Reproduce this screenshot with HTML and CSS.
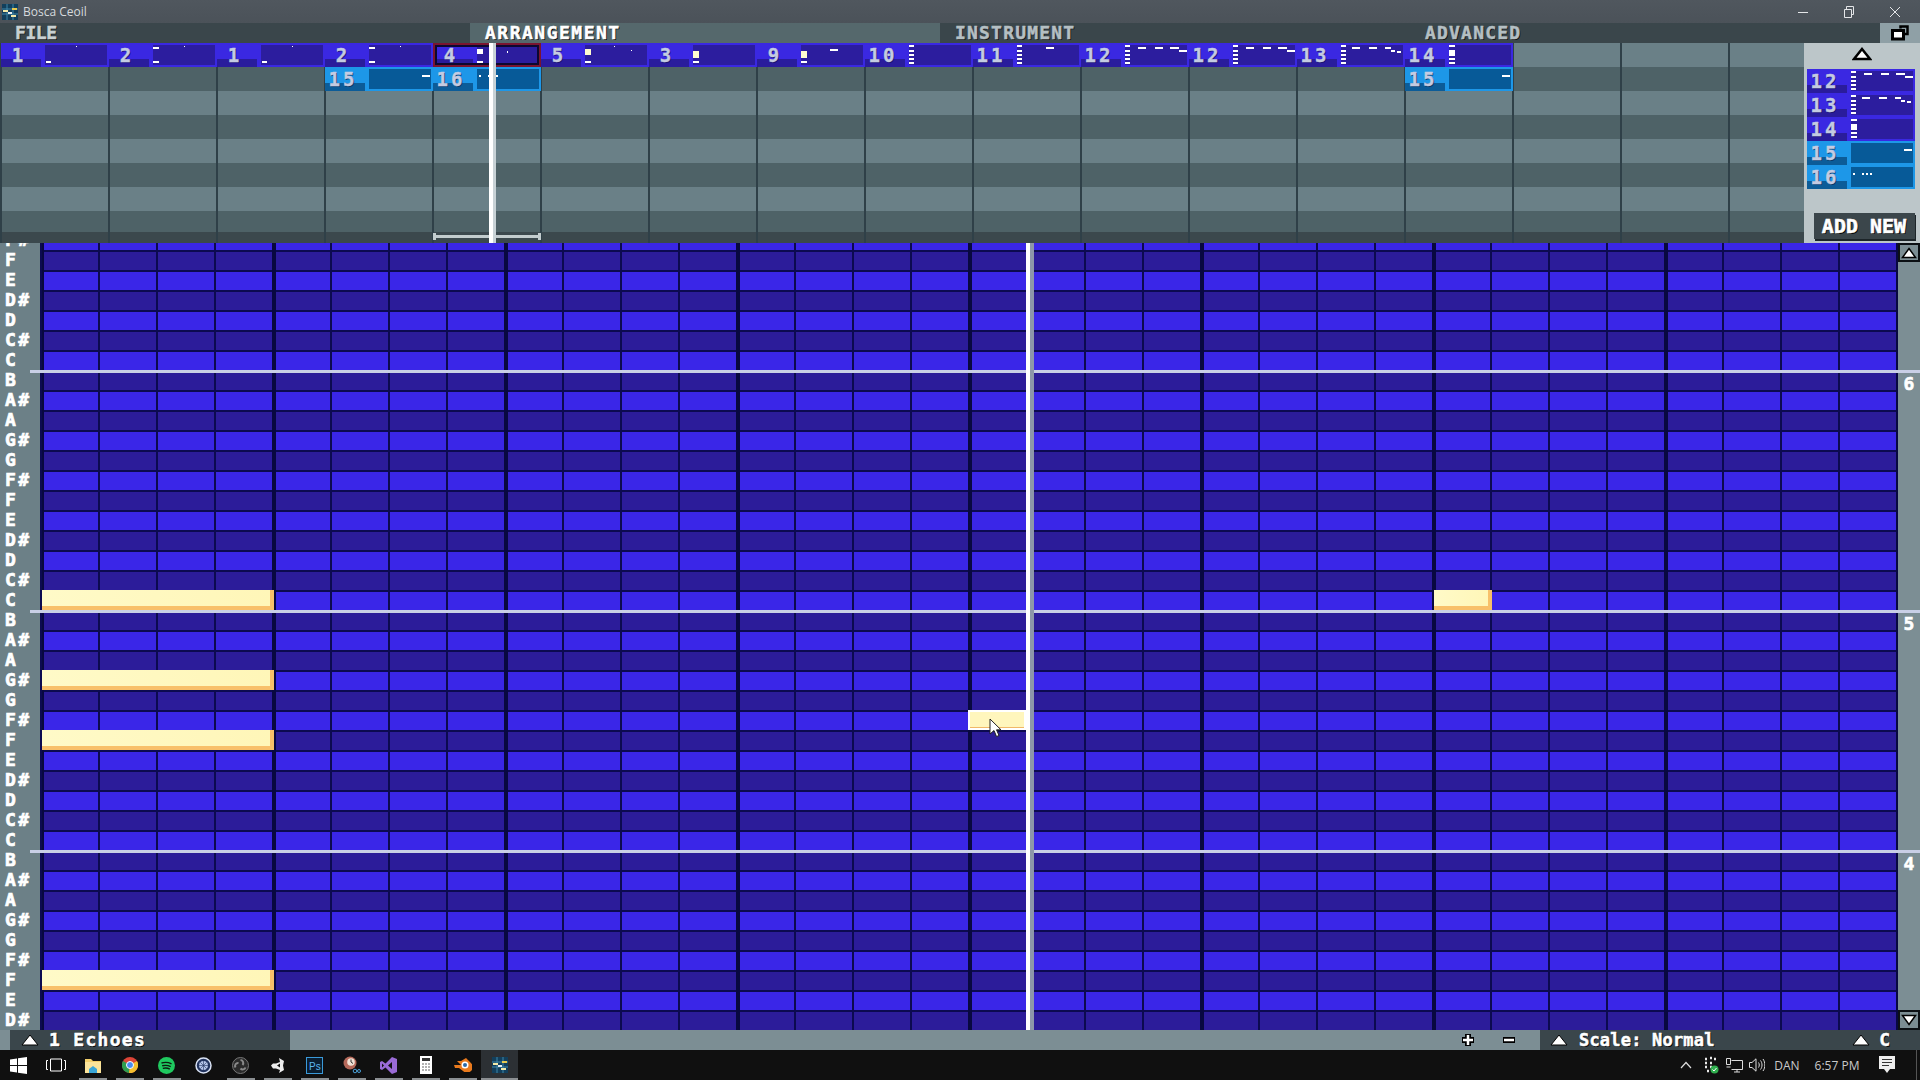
FILE: index.html
```html
<!DOCTYPE html>
<html lang="en">
<head>
  <meta charset="UTF-8">
  <title>Bosca Ceoil</title>
  <link rel="stylesheet" href="styles.css">
</head>
<body>
  <svg class="defs" width="0" height="0">
    <defs>
      <g id="n1"><rect x="45" y="18" width="5" height="2"/><rect x="75" y="3" width="1" height="1"/></g>
      <g id="n2"><rect x="44" y="4" width="6" height="2"/><rect x="44" y="18" width="6" height="2"/><rect x="75" y="3" width="1" height="1"/></g>
      <g id="n3"><rect x="44" y="8" width="6" height="7" fill="#fffbd0"/><rect x="44" y="18" width="6" height="2"/></g>
      <g id="n4"><rect x="44" y="6" width="6" height="5"/><rect x="44" y="18" width="6" height="2"/><rect x="74" y="8" width="1" height="2"/></g>
      <g id="n5"><rect x="44" y="6" width="6" height="6" fill="#fffbd0"/><rect x="44" y="18" width="6" height="2"/><rect x="73" y="3" width="1" height="1"/><rect x="90" y="7" width="1" height="1"/></g>
      <g id="n9"><rect x="44" y="8" width="6" height="7" fill="#fffbd0"/><rect x="44" y="18" width="6" height="2"/><rect x="73" y="6" width="8" height="2"/></g>
      <g id="n10"><rect x="44" y="2" width="5" height="2"/><rect x="44" y="7" width="5" height="2"/><rect x="44" y="11" width="5" height="2"/><rect x="44" y="15" width="5" height="2"/><rect x="44" y="19" width="5" height="2"/></g>
      <g id="n11"><use href="#n10"/><rect x="73" y="4" width="8" height="2"/></g>
      <g id="n12"><use href="#n10"/><rect x="57" y="4" width="8" height="2"/><rect x="74" y="4" width="8" height="2"/><rect x="89" y="4" width="9" height="2"/><rect x="98" y="7" width="8" height="2"/></g>
      <g id="n13"><use href="#n10"/><rect x="55" y="4" width="8" height="2"/><rect x="72" y="4" width="8" height="2"/><rect x="88" y="4" width="6" height="2"/><rect x="94" y="7" width="4" height="2"/><rect x="100" y="8" width="4" height="2"/></g>
      <g id="n14"><rect x="44" y="2" width="6" height="2"/><rect x="44" y="7" width="6" height="6"/><rect x="44" y="15" width="6" height="2"/><rect x="44" y="19" width="6" height="2"/></g>
      <g id="n15"><rect x="97" y="8" width="8" height="2"/></g>
      <g id="n16"><rect x="46" y="8" width="2" height="2"/><rect x="55" y="8" width="2" height="2"/><rect x="59" y="8" width="2" height="2"/><rect x="63" y="8" width="2" height="2"/></g>
      <g id="bosca">
        <rect width="16" height="16" fill="#123f5c"/>
        <path d="M0 5h16M0 10h16M5 0v16M11 0v16" stroke="#3f87a8" stroke-width="1"/>
        <rect x="1" y="6" width="5" height="2" fill="#f1e9a8"/><rect x="6" y="8" width="4" height="2" fill="#e9f1f4"/><rect x="10" y="4" width="5" height="2" fill="#e8c94e"/><rect x="9" y="11" width="5" height="2" fill="#f1e9a8"/>
      </g>
    </defs>
  </svg>

  <div class="app">
    <header class="titlebar">
      <svg class="title-icon" width="16" height="16"><use href="#bosca"/></svg>
      <span class="title-text">Bosca Ceoil</span>
      <div class="win-controls">
        <svg width="12" height="12" viewBox="0 0 12 12"><path d="M1 6.500h10" stroke="#e4e6e8" fill="none"/></svg>
        <svg width="12" height="12" viewBox="0 0 12 12"><path d="M1.500 3.500h7v8h-7zM3.500 3.500v-3h7v8h-2" stroke="#e4e6e8" fill="none"/></svg>
        <svg width="12" height="12" viewBox="0 0 12 12"><path d="M1 1l10 10M11 1L1 11" stroke="#e4e6e8" fill="none"/></svg>
      </div>
    </header>

    <nav class="tabs">
      <div class="tab tab-file">FILE</div>
      <div class="tab tab-active">ARRANGEMENT</div>
      <div class="tab tab-muted">INSTRUMENT</div>
      <div class="tab tab-muted">ADVANCED</div>
      <div class="tab-expand">
        <svg width="18" height="16" viewBox="0 0 18 16"><path d="M9.500 3.500V1.500h7v7.500h-3" fill="none" stroke="#000" stroke-width="2.500"/><path d="M1.500 5.500h11v8.500h-11z" fill="#fff" stroke="#000" stroke-width="3"/></svg>
      </div>
    </nav>

    <section class="arrangement">
      <div class="timeline">
        <div class="track">
          <div class="pat"><span class="pat-num">1</span><svg class="pat-notes" viewBox="44 2 62 20"><use href="#n1"/></svg></div>
          <div class="pat"><span class="pat-num">2</span><svg class="pat-notes" viewBox="44 2 62 20"><use href="#n2"/></svg></div>
          <div class="pat"><span class="pat-num">1</span><svg class="pat-notes" viewBox="44 2 62 20"><use href="#n1"/></svg></div>
          <div class="pat"><span class="pat-num">2</span><svg class="pat-notes" viewBox="44 2 62 20"><use href="#n2"/></svg></div>
          <div class="pat pat-selected"><span class="pat-num">4</span><svg class="pat-notes" viewBox="44 2 62 20"><use href="#n4"/></svg></div>
          <div class="pat"><span class="pat-num">5</span><svg class="pat-notes" viewBox="44 2 62 20"><use href="#n5"/></svg></div>
          <div class="pat"><span class="pat-num">3</span><svg class="pat-notes" viewBox="44 2 62 20"><use href="#n3"/></svg></div>
          <div class="pat"><span class="pat-num">9</span><svg class="pat-notes" viewBox="44 2 62 20"><use href="#n9"/></svg></div>
          <div class="pat"><span class="pat-num">10</span><svg class="pat-notes" viewBox="44 2 62 20"><use href="#n10"/></svg></div>
          <div class="pat"><span class="pat-num">11</span><svg class="pat-notes" viewBox="44 2 62 20"><use href="#n11"/></svg></div>
          <div class="pat"><span class="pat-num">12</span><svg class="pat-notes" viewBox="44 2 62 20"><use href="#n12"/></svg></div>
          <div class="pat"><span class="pat-num">12</span><svg class="pat-notes" viewBox="44 2 62 20"><use href="#n12"/></svg></div>
          <div class="pat"><span class="pat-num">13</span><svg class="pat-notes" viewBox="44 2 62 20"><use href="#n13"/></svg></div>
          <div class="pat"><span class="pat-num">14</span><svg class="pat-notes" viewBox="44 2 62 20"><use href="#n14"/></svg></div>
        </div>
        <div class="track">
          <div class="pat-gap gap-3"></div>
          <div class="pat pat-cyan"><span class="pat-num">15</span><svg class="pat-notes" viewBox="44 2 62 20"><use href="#n15"/></svg></div>
          <div class="pat pat-cyan"><span class="pat-num">16</span><svg class="pat-notes" viewBox="44 2 62 20"><use href="#n16"/></svg></div>
          <div class="pat-gap gap-8"></div>
          <div class="pat pat-cyan"><span class="pat-num">15</span><svg class="pat-notes" viewBox="44 2 62 20"><use href="#n15"/></svg></div>
        </div>
        <div class="bar-marker"></div>
        <div class="timeline-head"></div>
      </div>

      <aside class="pattern-panel">
        <svg class="panel-up" width="20" height="14" viewBox="0 0 20 14"><path d="M10 2L18 12H2z" fill="#fff" stroke="#000" stroke-width="2.500"/></svg>
        <div class="pattern-list">
          <div class="pat"><span class="pat-num">12</span><svg class="pat-notes" viewBox="44 2 62 20"><use href="#n12"/></svg></div>
          <div class="pat"><span class="pat-num">13</span><svg class="pat-notes" viewBox="44 2 62 20"><use href="#n13"/></svg></div>
          <div class="pat"><span class="pat-num">14</span><svg class="pat-notes" viewBox="44 2 62 20"><use href="#n14"/></svg></div>
          <div class="pat pat-cyan"><span class="pat-num">15</span><svg class="pat-notes" viewBox="44 2 62 20"><use href="#n15"/></svg></div>
          <div class="pat pat-cyan"><span class="pat-num">16</span><svg class="pat-notes" viewBox="44 2 62 20"><use href="#n16"/></svg></div>
        </div>
        <button class="add-new">ADD NEW</button>
      </aside>
    </section>

    <section class="roll">
      <div class="keys">
        <div class="key">F#</div><div class="key">F</div><div class="key">E</div><div class="key">D#</div><div class="key">D</div><div class="key">C#</div><div class="key">C</div>
        <div class="key">B</div><div class="key">A#</div><div class="key">A</div><div class="key">G#</div><div class="key">G</div><div class="key">F#</div><div class="key">F</div><div class="key">E</div><div class="key">D#</div><div class="key">D</div><div class="key">C#</div><div class="key">C</div>
        <div class="key">B</div><div class="key">A#</div><div class="key">A</div><div class="key">G#</div><div class="key">G</div><div class="key">F#</div><div class="key">F</div><div class="key">E</div><div class="key">D#</div><div class="key">D</div><div class="key">C#</div><div class="key">C</div>
        <div class="key">B</div><div class="key">A#</div><div class="key">A</div><div class="key">G#</div><div class="key">G</div><div class="key">F#</div><div class="key">F</div><div class="key">E</div><div class="key">D#</div>
      </div>

      <div class="note-grid">
        <div class="note note-c5"></div>
        <div class="note note-gs4"></div>
        <div class="note note-f4"></div>
        <div class="note note-f3"></div>
        <div class="note note-c5b"></div>
        <div class="note note-hover"></div>
        <div class="roll-head"></div>
        <svg class="cursor" width="14" height="20" viewBox="0 0 14 20"><path d="M1 1v15l4-3.500 2.500 6 2.500-1-2.500-5.700H12z" fill="#fff" stroke="#222" stroke-width="1"/></svg>
      </div>

      <div class="octaves">
        <button class="scroll-btn"><svg width="16" height="12" viewBox="0 0 16 12"><path d="M8 1.500l6.500 9h-13z" fill="#fff" stroke="#000" stroke-width="1.500"/></svg></button>
        <div class="octave octave-first">6</div>
        <div class="octave">5</div>
        <div class="octave">4</div>
        <button class="scroll-btn scroll-down"><svg width="16" height="12" viewBox="0 0 16 12"><path d="M8 10.500l6.500-9h-13z" fill="#fff" stroke="#000" stroke-width="1.500"/></svg></button>
      </div>

      <div class="octave-line line-a"></div>
      <div class="octave-line line-b"></div>
      <div class="octave-line line-c"></div>
    </section>

    <footer class="bottombar">
      <div class="seg seg-song">
        <svg class="seg-up" width="18" height="12" viewBox="0 0 18 12"><path d="M9 1l8 10H1z" fill="#fff" stroke="#000"/></svg>
        <span class="seg-text seg-song-text">1 Echoes</span>
      </div>
      <div class="zoom-btns">
        <svg width="16" height="16" viewBox="0 0 16 16"><path d="M8 2v12M2 8h12" stroke="#000" stroke-width="6"/><path d="M8 3v10M3 8h10" stroke="#fff" stroke-width="2.500"/></svg>
        <svg width="16" height="16" viewBox="0 0 16 16"><path d="M2 8h12" stroke="#000" stroke-width="6"/><path d="M3 8h10" stroke="#fff" stroke-width="2.500"/></svg>
      </div>
      <div class="seg seg-scale">
        <svg class="seg-up" width="18" height="12" viewBox="0 0 18 12"><path d="M9 1l8 10H1z" fill="#fff" stroke="#000"/></svg>
        <span class="seg-text seg-scale-text">Scale: Normal</span>
        <svg class="seg-up seg-key-up" width="18" height="12" viewBox="0 0 18 12"><path d="M9 1l8 10H1z" fill="#fff" stroke="#000"/></svg>
        <span class="seg-text seg-key">C</span>
      </div>
    </footer>

    <div class="taskbar">
      <div class="task"><svg width="17" height="17" viewBox="0 0 17 17"><path d="M0 2.500l7-1v6.500H0zM8 1.300L17 0v8H8zM0 9h7v6.500l-7-1zM8 9h9v8l-9-1.300z" fill="#fff"/></svg></div>
      <div class="task"><svg width="20" height="14" viewBox="0 0 20 14"><path d="M4.500 1h11v12h-11zM2 2.500H.5v9H2M18 2.500h1.500v9H18" fill="none" stroke="#fff"/></svg></div>
      <div class="task task-on"><svg width="16" height="15" viewBox="0 0 16 15"><path d="M0 1h6l2 2h8v12H0z" fill="#f3cf6b"/><path d="M0 4h16v11H0z" fill="#fbe49a"/><path d="M4 15v-4l4-3 4 3v4z" fill="#3aa6d8"/></svg></div>
      <div class="task task-on"><svg width="16" height="16" viewBox="0 0 16 16"><circle cx="8" cy="8" r="8" fill="#dc4437"/><path d="M8 8L1 4A8 8 0 0 0 7 16z" fill="#2f9e4f"/><path d="M8 8l7-4a8 8 0 0 1-8 12z" fill="#f5bf2f"/><circle cx="8" cy="8" r="3.500" fill="#4a8cf0" stroke="#fff"/></svg></div>
      <div class="task task-on"><svg width="17" height="17" viewBox="0 0 17 17"><circle cx="8.500" cy="8.500" r="8.500" fill="#1fc95f"/><path d="M3.500 6c3.500-1 7-.7 10 .8M4.200 8.800c3-.8 6-.5 8.500.8M4.800 11.400c2.500-.6 5-.4 7 .7" stroke="#0d1a10" stroke-width="1.400" fill="none"/></svg></div>
      <div class="task"><svg width="17" height="17" viewBox="0 0 17 17"><circle cx="8.500" cy="8.500" r="7.500" fill="#22345f" stroke="#d9e2f4" stroke-width="1.500"/><circle cx="8.500" cy="8.500" r="4.500" fill="#b6c6ea"/><path d="M8.500 4v9M4 8.500h9M5.300 5.300l6.400 6.400M11.700 5.300l-6.400 6.400" stroke="#22345f" stroke-width=".6"/></svg></div>
      <div class="task task-on"><svg width="17" height="17" viewBox="0 0 17 17"><circle cx="8.500" cy="8.500" r="8" fill="#2a2a2a" stroke="#777"/><path d="M8.500 3a3 3 0 0 1 2 5M13.500 10.500a3 3 0 0 1-5 1M3.500 10.500a3 3 0 0 1 3-4.500" fill="none" stroke="#8a8a8a" stroke-width="2"/></svg></div>
      <div class="task task-on"><svg width="14" height="15" viewBox="0 0 14 15"><path d="M8 0l5 3-1 4.500 1 4.500-5 3 1-3-4-1.500H2L0 7.500 2 5.500h3L9 4z" fill="#eee"/><path d="M6 7.500l3-2v4z" fill="#111"/></svg></div>
      <div class="task task-on"><svg width="17" height="17" viewBox="0 0 17 17"><rect x=".5" y=".5" width="16" height="16" fill="#0a1e30" stroke="#3a9ad9"/><text x="3" y="12.500" fill="#5bb6ef" font-size="10" font-family="Liberation Sans, sans-serif">Ps</text></svg></div>
      <div class="task task-on"><svg width="18" height="18" viewBox="0 0 18 18"><circle cx="7" cy="7" r="6.500" fill="#b5695a"/><circle cx="8" cy="6" r="3.800" fill="#f0e2d6"/><path d="M8 3.500V6l2 1.500" stroke="#333" fill="none"/><circle cx="12" cy="15" r="1.800" fill="none" stroke="#4aa0d8"/><circle cx="16" cy="15" r="1.500" fill="none" stroke="#4aa0d8"/></svg></div>
      <div class="task task-on"><svg width="17" height="17" viewBox="0 0 17 17"><path d="M12 0l5 2v13l-5 2-6.500-6.500L2 13l-2-1V5l2-1 3.500 2.500z" fill="#9a6bd6"/><path d="M12 5L8 8.500l4 3.500zM2 6.500v4l2-2z" fill="#111"/></svg></div>
      <div class="task task-on"><svg width="12" height="18" viewBox="0 0 12 18"><rect width="12" height="18" fill="#fff"/><rect x="2" y="2" width="8" height="3" fill="#333"/><path d="M2.500 8h1M5.500 8h1M8.500 8h1M2.500 11h1M5.500 11h1M8.500 11h1M2.500 14h1M5.500 14h1M8.500 14h1" stroke="#333" stroke-width="1.500"/></svg></div>
      <div class="task task-on"><svg width="18" height="14" viewBox="0 0 18 14"><path d="M0 7h7L3 3h4l5-3 5 5a5.500 5.500 0 0 1-8 8l-4-3H1z" fill="#ea7a1d"/><circle cx="11" cy="7" r="3.500" fill="#fff"/><circle cx="11" cy="7" r="2" fill="#2c6aa8"/></svg></div>
      <div class="task task-active"><svg width="16" height="16"><use href="#bosca"/></svg></div>

      <div class="tray">
        <div class="tray-slot"><svg width="12" height="8" viewBox="0 0 12 8"><path d="M1 7l5-5.500L11 7" fill="none" stroke="#ddd" stroke-width="1.200"/></svg></div>
        <div class="tray-slot"><svg width="17" height="18" viewBox="0 0 17 18"><path d="M3 3h2M8 2h2M12 3h2M3 7h2M8 7h2M3 11h2M8 11h2M5 15h2" stroke="#e8e8e8" stroke-width="2.500"/><circle cx="12.500" cy="13.500" r="4" fill="#2fae4e"/><path d="M10.500 13.500l1.500 1.500 2.500-3" stroke="#fff" fill="none"/></svg></div>
        <div class="tray-slot"><svg width="17" height="15" viewBox="0 0 17 15"><path d="M5.500 2.500h11v9h-11M11 11.500V14M8 14h6M.5.500h4v6h-4zM.5 9h4" fill="none" stroke="#ddd"/></svg></div>
        <div class="tray-slot tray-vol"><svg width="16" height="14" viewBox="0 0 16 14"><path d="M.5 4.500h2.500L7 .8v12.400L3 9.500H.5zM9.500 4.500c1 1.500 1 3.500 0 5M11.500 2.500c2 2.500 2 6.500 0 9M14 1c2.500 3.500 2.500 8.500 0 12" fill="none" stroke="#ddd"/></svg></div>
        <div class="tray-text tray-lang">DAN</div>
        <div class="tray-text tray-clock">6:57 PM</div>
        <div class="tray-slot tray-notif"><svg width="16" height="18" viewBox="0 0 16 18"><path d="M0 0h16v13h-5l-3 4-3-4H0z" fill="#eee"/><path d="M3 3.500h10M3 6.500h10M3 9.500h7" stroke="#333"/></svg></div>
        <div class="show-desktop"></div>
      </div>
    </div>
  </div>
</body>
</html>
```

FILE: styles.css
```css
* { margin: 0; padding: 0; box-sizing: border-box; }

body {
  background: #101010;
  overflow: hidden;
  font-family: "DejaVu Sans Mono", "Liberation Mono", monospace;
}

.defs { position: absolute; }

.app {
  width: 1920px;
  height: 1080px;
  display: flex;
  flex-direction: column;
}

/* window title */
.titlebar {
  height: 23px;
  background: linear-gradient(#50575e, #4b5259);
  display: flex;
  align-items: center;
  padding-left: 2px;
}

.title-text {
  margin-left: 5px;
  font-family: "Open Sans", sans-serif;
  font-size: 12px;
  color: #d6dadd;
}

.win-controls {
  margin-left: auto;
  display: flex;
  gap: 34px;
  padding-right: 19px;
}

/* tabs */
.tabs {
  height: 20px;
  display: flex;
  background: #3a464b;
}

.tab {
  width: 470px;
  padding-left: 15px;
  font-size: 18px;
  line-height: 20px;
  font-weight: bold;
  letter-spacing: 1.500px;
  color: #c8d0d2;
  text-shadow: 1px 1px 0 #111;
  -webkit-text-stroke: .5px currentColor;
}

.tab-file { letter-spacing: -.4px; }

.tab-active {
  background: #55686c;
  color: #fff;
  text-shadow: 1px 1px 0 #000;
}

.tab-muted { color: #b4bfc3; letter-spacing: 1.200px; }

.tab-expand {
  width: 40px;
  background: #8fa0a6;
  display: flex;
  align-items: center;
  justify-content: center;
}

/* arrangement */
.arrangement {
  height: 200px;
  display: flex;
}

.timeline {
  width: 1804px;
  position: relative;
  background-color: #6a8087;
  background-image:
    linear-gradient(90deg, transparent 106px, #2f4048 106px),
    linear-gradient(to top, #3b484d 11px, transparent 11px),
    linear-gradient(#6a8087 24px, #4e6267 24px);
  background-size: 108px 100%, 100% 100%, 100% 48px;
  background-position: 2px 0, 0 0, 0 0;
}

.track {
  display: flex;
  height: 24px;
  padding-left: 1px;
}

.pat-gap { flex-shrink: 0; }
.gap-3 { width: 324px; }
.gap-8 { width: 864px; }

.pat {
  position: relative;
  flex-shrink: 0;
  width: 108px;
  height: 24px;
  display: flex;
  padding: 2px 2px 2px 0;
  background: #3a28e2;
}

.pat-num {
  width: 44px;
  height: 22px;
  padding-right: 8px;
  text-align: center;
  font-size: 19px;
  line-height: 20px;
  font-weight: bold;
  letter-spacing: 3px;
  color: #c4cbe2;
  text-shadow: 1px 1px 0 #1c1470;
  -webkit-text-stroke: .4px currentColor;
  background: linear-gradient(transparent 14px, #2a1c9c 14px);
  background-size: 40px 100%;
  background-repeat: no-repeat;
}

.pat-notes {
  width: 62px;
  height: 20px;
  background: #2c1d9e;
  fill: #fff;
}

.pat-cyan { background: #1d97e8; }
.pat-cyan .pat-num {
  background-image: linear-gradient(transparent 14px, #0c5c98 14px);
  text-shadow: 1px 1px 0 #0a3a68;
}
.pat-cyan .pat-notes { background: #075a98; }

.pat-selected::after {
  content: "";
  position: absolute;
  inset: 0;
  border: 2px solid #7a1430;
  box-shadow: inset 0 0 0 2px #0c0830;
}

.timeline-head {
  position: absolute;
  left: 489px;
  top: 0;
  width: 7px;
  height: 200px;
  background: linear-gradient(90deg, #fff 4px, #c8d2d6 4px);
}

.bar-marker {
  position: absolute;
  left: 433px;
  top: 190px;
  width: 108px;
  height: 7px;
  border-left: 3px solid #c2ccce;
  border-right: 3px solid #c2ccce;
  background: linear-gradient(transparent 2px, #c2ccce 2px, #c2ccce 5px, transparent 5px);
}

.pattern-panel {
  width: 116px;
  background: #bcc6c9;
  padding: 4px 5px 3px 3px;
  display: flex;
  flex-direction: column;
  align-items: center;
}

.panel-up {
  flex-shrink: 0;
  margin-left: 2px;
}

.pattern-list {
  margin-top: 8px;
  display: flex;
  flex-direction: column;
  align-self: flex-start;
}

.add-new {
  margin-top: auto;
  margin-bottom: 1px;
  margin-left: 6px;
  width: 101px;
  height: 26px;
  border: none;
  background: #3b464b;
  box-shadow: 1px 2px 0 #1c2428;
  font-family: inherit;
  font-size: 20px;
  font-weight: bold;
  color: #fff;
  white-space: nowrap;
  -webkit-text-stroke: .6px #fff;
  text-shadow: 1px 1px 0 #000;
}

/* piano roll */
.roll {
  position: relative;
  height: 787px;
  display: flex;
  overflow: hidden;
}

.keys {
  width: 42px;
  height: 787px;
  overflow: hidden;
  flex-shrink: 0;
  background: linear-gradient(90deg, #6c8087 40px, #0c0a50 40px);
}

.key {
  height: 20px;
  padding-left: 5px;
  font-size: 18px;
  line-height: 20px;
  font-weight: bold;
  letter-spacing: 2.500px;
  color: #fff;
  -webkit-text-stroke: .7px #fff;
}

.key:first-child { margin-top: -13px; }

.note-grid {
  position: relative;
  width: 1856px;
  background-color: #3a26e8;
  background-image:
    linear-gradient(90deg, transparent 228px, #080840 228px),
    linear-gradient(90deg, transparent 56px, #0c0a50 56px),
    linear-gradient(#0c0a50 2px, #3a26e8 2px, #3a26e8 20px, #0c0a50 20px, #0c0a50 22px, #2c1c9a 22px);
  background-size: 232px 100%, 58px 100%, 100% 40px;
  background-position: 2px 0, 0 0, 0 -13px;
}

.note {
  position: absolute;
  height: 20px;
  background: linear-gradient(90deg, #fffac8, #fff6b8);
  border-right: 4px solid #f8c06a;
  border-bottom: 4px solid #f8c06a;
}

.note-c5 { left: 0; top: 347px; width: 232px; }
.note-gs4 { left: 0; top: 427px; width: 232px; }
.note-f4 { left: 0; top: 487px; width: 232px; }
.note-f3 { left: 0; top: 727px; width: 232px; }
.note-c5b { left: 1392px; top: 347px; width: 58px; }

.note-hover {
  left: 926px;
  top: 467px;
  width: 58px;
  background: #fff6bd;
  border: 2px solid #fff;
  box-shadow: inset 0 -1px 0 #f0b868;
}

.roll-head {
  position: absolute;
  left: 984px;
  top: 0;
  width: 8px;
  height: 787px;
  background: linear-gradient(90deg, #fff 4px, #8d97a9 4px);
  z-index: 2;
}

.cursor {
  position: absolute;
  left: 947px;
  top: 475px;
  z-index: 3;
}

.octaves {
  width: 22px;
  background: #7c8e94;
  display: flex;
  flex-direction: column;
  align-items: center;
}

.scroll-btn {
  width: 22px;
  height: 19px;
  border: 2px solid #0c1014;
  background: #7b8d93;
  display: flex;
  align-items: center;
  justify-content: center;
  flex-shrink: 0;
}

.scroll-down {
  height: 20px;
  margin-top: auto;
}

.octave {
  height: 20px;
  margin-top: 220px;
  font-size: 18px;
  line-height: 20px;
  font-weight: bold;
  color: #fff;
  -webkit-text-stroke: .6px #fff;
}

.octave-first { margin-top: 112px; }

.octave-line {
  position: absolute;
  left: 30px;
  right: 0;
  height: 3px;
  background: #c9cfe6;
}

.line-a { top: 127px; }
.line-b { top: 367px; }
.line-c { top: 607px; }

/* bottom bar */
.bottombar {
  height: 20px;
  background: #7c8e94;
  display: flex;
  align-items: center;
  padding-left: 10px;
}

.seg {
  height: 20px;
  background: #3a464b;
  display: flex;
  align-items: center;
}

.seg-song {
  width: 280px;
  padding-left: 11px;
}

.seg-scale {
  width: 380px;
  padding: 0 30px 0 10px;
}

.seg-text {
  margin-left: 11px;
  font-size: 18px;
  line-height: 20px;
  font-weight: bold;
  color: #fff;
  text-shadow: 1px 1px 0 #000;
  -webkit-text-stroke: .5px #fff;
}

.seg-song-text {
  margin-left: 10px;
  letter-spacing: 1.300px;
}

.seg-scale-text {
  font-size: 17px;
  letter-spacing: .2px;
}

.seg-key-up { margin-left: auto; }
.seg-key { margin-left: 9px; }

.zoom-btns {
  margin-left: auto;
  margin-right: 23px;
  display: flex;
  gap: 25px;
}

/* taskbar */
.taskbar {
  height: 30px;
  background: #101010;
  display: flex;
}

.task {
  position: relative;
  width: 37px;
  height: 30px;
  display: flex;
  align-items: center;
  justify-content: center;
}

.task-on::after,
.task-active::after {
  content: "";
  position: absolute;
  left: 5px;
  right: 4px;
  bottom: 0;
  height: 2px;
  background: #8b8f92;
}

.task-active { background: #2c3034; }
.task-active::after { left: 0; right: 0; }

.tray {
  margin-left: auto;
  display: flex;
  align-items: center;
  height: 30px;
}

.tray-slot {
  width: 24px;
  display: flex;
  justify-content: center;
}

.tray-vol { width: 22px; }

.tray-text {
  font-family: "Open Sans", sans-serif;
  font-size: 12px;
  color: #c9c9c9;
  text-align: center;
}

.tray-lang { width: 38px; }
.tray-clock { width: 62px; }
.tray-notif { width: 38px; }

.show-desktop {
  width: 11px;
  height: 30px;
  border-right: 1px solid #555;
  margin-right: 3px;
}
```
